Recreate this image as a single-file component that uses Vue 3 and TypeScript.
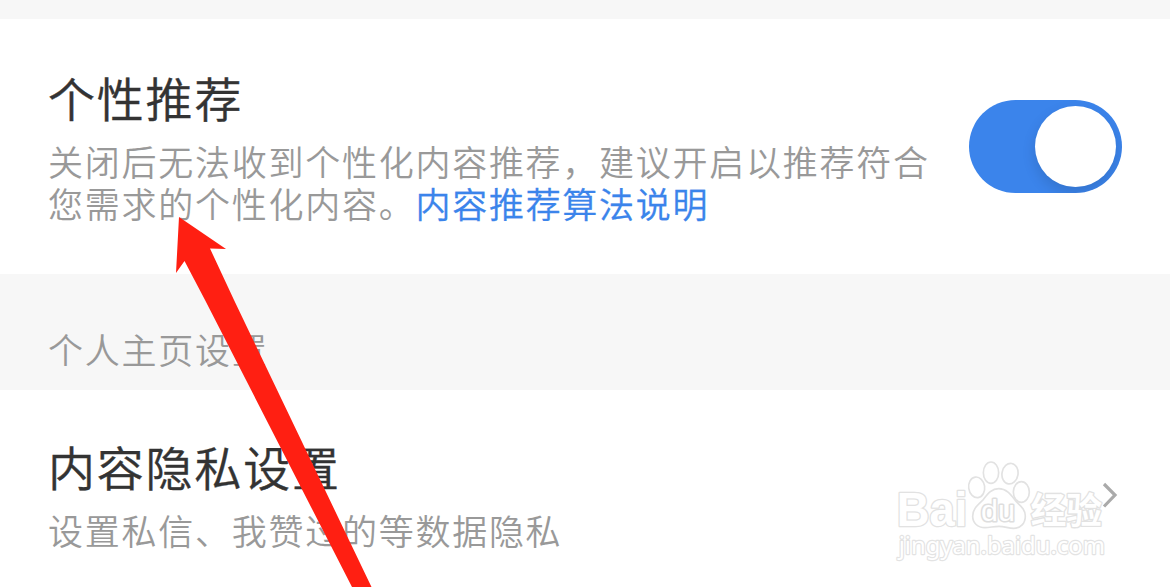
<script setup lang="ts">
import { ref } from 'vue'

const recommend = ref<boolean>(true)
</script>

<template>
  <main class="page">
    <section class="card recommend">
      <div class="copy">
        <h2 class="title">个性推荐</h2>
        <p class="desc">
          关闭后无法收到个性化内容推荐，建议开启以推荐符合<br />您需求的个性化内容。<a class="link">内容推荐算法说明</a>
        </p>
      </div>
      <button class="switch" :class="{ on: recommend }" role="switch" :aria-checked="recommend" @click="recommend = !recommend">
        <span class="knob"></span>
      </button>
    </section>
    <div class="group">个人主页设置</div>
    <section class="card privacy">
      <div class="copy">
        <h2 class="title">内容隐私设置</h2>
        <p class="desc">设置私信、我赞过的等数据隐私</p>
      </div>
      <svg class="chevron" viewBox="0 0 18 28"><path d="M3 3 L14 14 L3 25.5" /></svg>
    </section>

    <svg class="watermark" viewBox="0 0 900 441">
      <g class="mark">
        <text class="brand" x="80" y="259" font-size="142" textLength="212" lengthAdjust="spacingAndGlyphs">Bai</text>
        <ellipse cx="320" cy="142" rx="24" ry="31" transform="rotate(-8 320 142)" />
        <ellipse cx="363" cy="98" rx="23" ry="32" />
        <ellipse cx="420" cy="101" rx="24" ry="31" transform="rotate(10 420 101)" />
        <ellipse cx="454" cy="156" rx="24" ry="31" />
        <path d="M386 146C362 146 351 165 337 182C321 197 308 208 308 229C308 249 323 263 345 263C360 263 370 259 387 259C405 259 414 265 431 265C452 265 466 250 466 228C466 208 452 198 438 184C424 166 411 146 386 146Z" />
        <text class="du" x="333" y="243" font-size="86" textLength="102" lengthAdjust="spacingAndGlyphs">du</text>
        <text class="cn" x="482" y="251" font-size="108" textLength="214" lengthAdjust="spacingAndGlyphs">经验</text>
        <text class="url" x="86" y="343" font-size="71" textLength="619" lengthAdjust="spacingAndGlyphs">jingyan.baidu.com</text>
      </g>
    </svg>
    <svg class="pointer" viewBox="0 0 1170 587">
      <polygon points="179,217 226,249 210,248.5 234,300 371.5,587 352,587 205,300 184.5,261 176,273" />
    </svg>
  </main>
</template>

<style>
body {
  margin: 0;
}
</style>

<style scoped>
.page {
  position: relative;
  width: 1170px;
  height: 587px;
  padding-top: 19px;
  box-sizing: border-box;
  overflow: hidden;
  background: #f7f7f7;
  font-family: "Noto Sans CJK SC", sans-serif;
  font-weight: 350;
}
.card {
  display: flex;
  justify-content: space-between;
  box-sizing: border-box;
  padding: 0 48px 0 48px;
  background: #fff;
}
.recommend {
  height: 255px;
  padding-top: 43px;
}
.privacy {
  height: 197px;
  padding-top: 41px;
}
.title {
  margin: 0;
  height: 70px;
  font-size: 47px;
  line-height: 70px;
  font-weight: 350;
  letter-spacing: 1.8px;
  color: #333;
  -webkit-text-stroke: 0.4px #333;
}
.desc {
  margin: 8px 0 0;
  font-size: 35px;
  line-height: 42px;
  letter-spacing: 1.74px;
  color: #999;
  white-space: nowrap;
}
.link {
  color: #3b84eb;
  -webkit-text-stroke: 0.3px #3b84eb;
}
.switch {
  display: flex;
  align-items: center;
  width: 153px;
  height: 93px;
  margin-top: 38px;
  padding: 0 6px;
  box-sizing: border-box;
  border: 0;
  border-radius: 47px;
  background: #ddd;
  overflow: hidden;
  flex: none;
}
.switch.on {
  justify-content: flex-end;
  background: #3b84eb;
}
.knob {
  width: 81px;
  height: 81px;
  border-radius: 50%;
  background: #fff;
  box-shadow: 0 6px 14px rgba(0, 0, 0, 0.13);
}
.group {
  height: 116px;
  padding: 35px 48px 0;
  box-sizing: border-box;
  font-size: 35px;
  line-height: 80px;
  letter-spacing: 1.74px;
  color: #999;
}
.chevron {
  width: 18px;
  height: 28px;
  margin-top: 50px;
  margin-right: 3px;
  fill: none;
  stroke: #aaa;
  stroke-width: 3.2;
}
.watermark {
  position: absolute;
  left: 870px;
  top: 440px;
  width: 300px;
  height: 147px;
}
.mark {
  fill: #fff;
  stroke: #e2e2e2;
  stroke-width: 5;
  stroke-linejoin: round;
}
.mark text {
  paint-order: stroke;
  stroke-width: 8;
}
.brand,
.du {
  font-family: "Liberation Sans", sans-serif;
  font-weight: 700;
}
.mark .du {
  font-weight: 400;
  stroke: #dedede;
  stroke-width: 9;
}
.cn {
  font-family: "Noto Sans CJK SC", sans-serif;
  font-weight: 700;
}
.mark .url {
  font-family: "Noto Sans", sans-serif;
  font-weight: 400;
  stroke: #e3e3e3;
  stroke-width: 7;
}
.pointer {
  position: absolute;
  left: 0;
  top: 0;
  width: 1170px;
  height: 587px;
  fill: #ff1f12;
  pointer-events: none;
}
</style>
